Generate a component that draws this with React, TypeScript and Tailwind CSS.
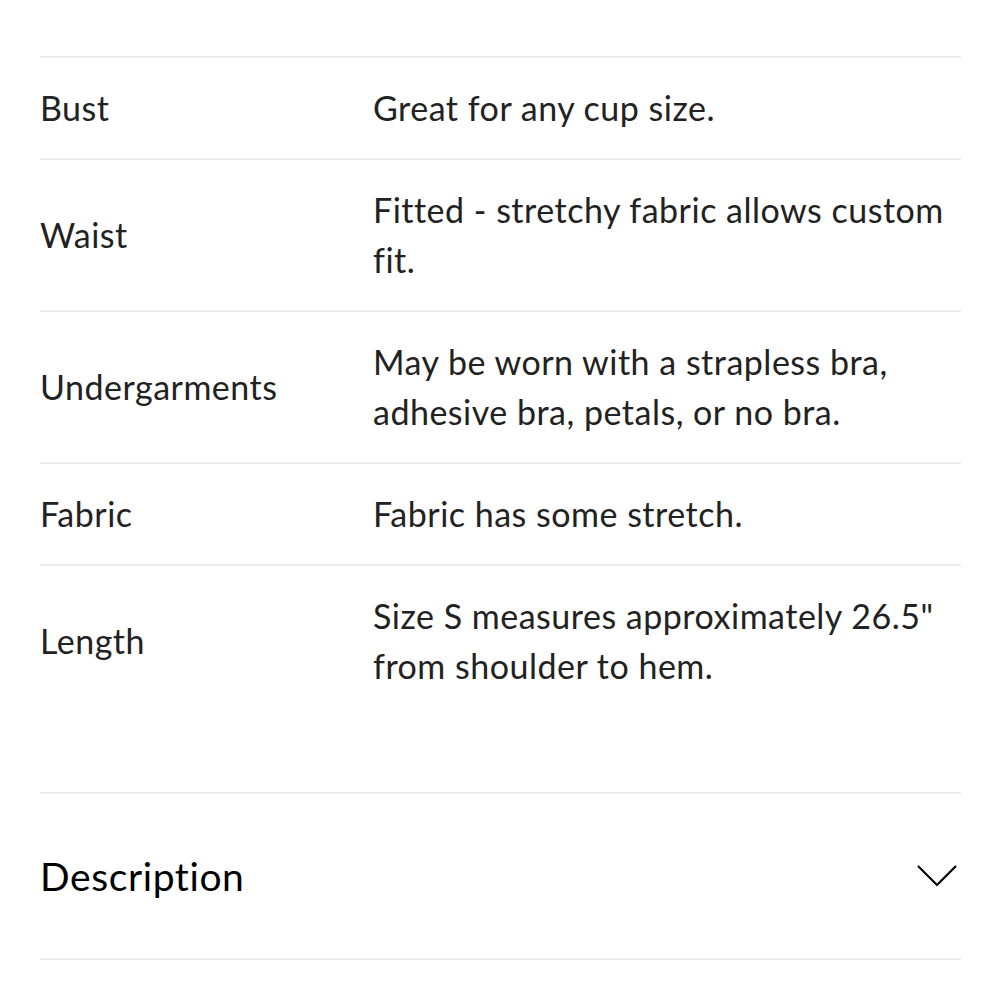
import { useState } from 'react'

const rows = [
    { label: 'Bust', value: 'Great for any cup size.' },
    { label: 'Waist', value: 'Fitted - stretchy fabric allows custom fit.' },
    { label: 'Undergarments', value: 'May be worn with a strapless bra, adhesive bra, petals, or no bra.' },
    { label: 'Fabric', value: 'Fabric has some stretch.' },
    { label: 'Length', value: 'Size S measures approximately 26.5" from shoulder to hem.' },
]

const Divider = () => <div className="h-[2px] bg-[#ececec]" />

export default function App() {
    const [open, setOpen] = useState(false)
    return (
        <div className="bg-white min-h-[1000px] pl-10 pr-[39px] pt-[56px] text-[#222]"
            style={{ fontFamily: 'Lato, "Open Sans", sans-serif' }}>
            <Divider />
            {rows.map((row, index) => (
                <div key={row.label}>
                    <div className="flex items-center py-[25px] text-[34px] leading-[50px] tracking-[0.5px]">
                        <div className="w-[333px] shrink-0">{row.label}</div>
                        <div className="flex-1 mr-[-10px]">{row.value}</div>
                    </div>
                    {index < rows.length - 1 && <Divider />}
                </div>
            ))}
            <div className="h-[76px]" />
            <Divider />
            <button type="button" onClick={() => setOpen(!open)}
                className="w-full flex items-center justify-between h-[164px] text-left">
                <span className="text-[39px] tracking-[0.6px] text-black">Description</span>
                <svg width="40" height="22" viewBox="0 0 40 22" fill="none" className="mr-[4px]">
                    <path d="M1 1 L20 20 L39 1" stroke="#000" strokeWidth="2.2" />
                </svg>
            </button>
            <Divider />
        </div>
    )
}
